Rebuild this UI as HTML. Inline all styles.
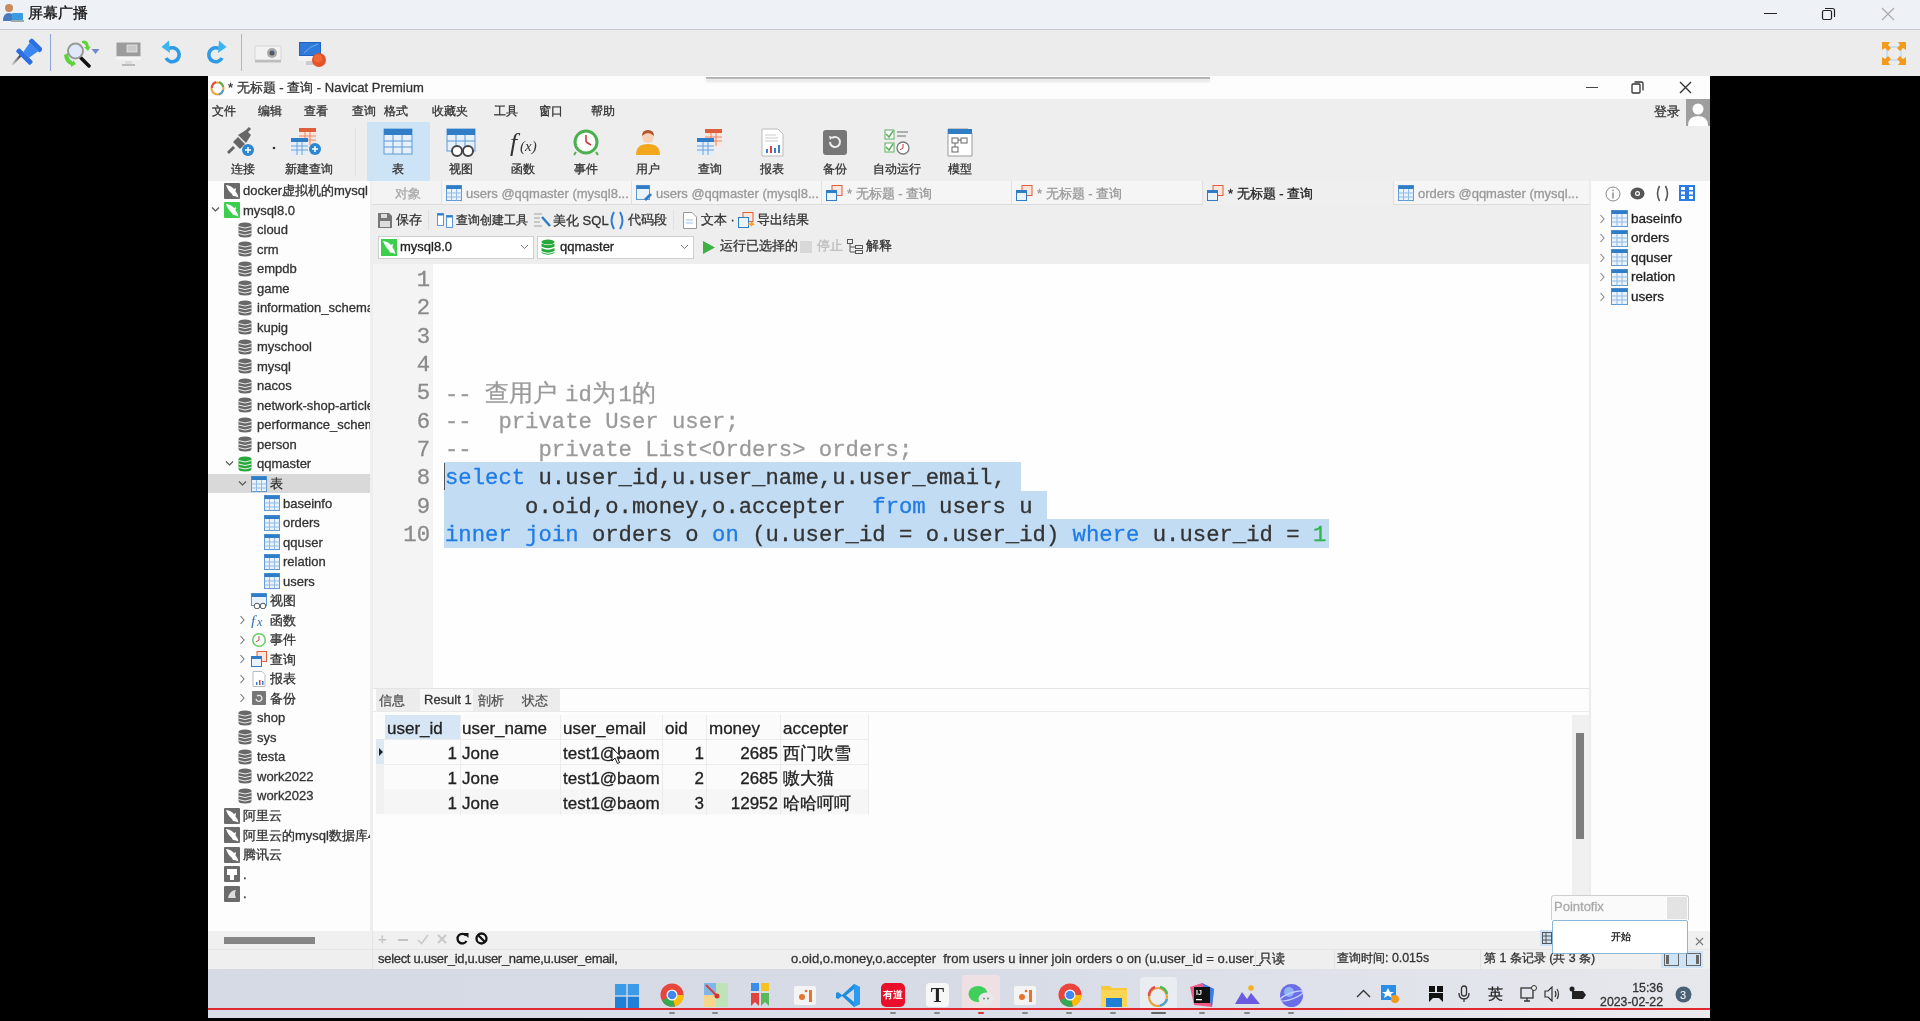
<!DOCTYPE html>
<html><head><meta charset="utf-8">
<style>
*{margin:0;padding:0;box-sizing:border-box}
html,body{width:1920px;height:1021px;overflow:hidden;background:#000;font-family:"Liberation Sans",sans-serif;color:#333;position:relative}
.a{position:absolute}
.t{position:absolute;white-space:nowrap;line-height:1;-webkit-text-stroke:0.3px currentColor}
</style></head><body>
<div style="position:absolute;left:0;top:0;width:1920px;height:1021px;filter:blur(0.45px)">
<!-- outer title bar -->
<div class="a" style="left:0;top:0;width:1920px;height:29px;background:#eef2f7"></div>
<div class="a" style="left:0;top:29px;width:1920px;height:1px;background:#c9c9cc"></div>
<div class="a" style="left:0;top:30px;width:1920px;height:46px;background:#ececec"></div>
<svg class="a" style="left:2px;top:3px" width="22" height="20" viewBox="0 0 22 20">
 <circle cx="7" cy="5" r="4" fill="#c98b5a"/><path d="M1 18 Q1 10 7 10 Q12 10 13 16 L13 18Z" fill="#4a7bbd"/>
 <rect x="10" y="10" width="11" height="7" rx="1" fill="#3a9be0"/><rect x="9" y="17" width="13" height="2" fill="#9aa"/>
</svg>
<div class="t" style="left:28px;top:5px;font-size:15px;color:#111">屏幕广播</div>
<div class="a" style="left:1764px;top:13px;width:13px;height:1px;background:#222"></div>
<svg class="a" style="left:1821px;top:7px" width="15" height="14" viewBox="0 0 15 14"><rect x="1.5" y="3.5" width="9" height="9" rx="1.5" fill="none" stroke="#222" stroke-width="1.2"/><path d="M4 1.5 H11.5 Q13.5 1.5 13.5 3.5 V10" fill="none" stroke="#222" stroke-width="1.2"/></svg>
<svg class="a" style="left:1881px;top:7px" width="14" height="14" viewBox="0 0 14 14"><path d="M1 1 L13 13 M13 1 L1 13" stroke="#aaa" stroke-width="1.2"/></svg>
<!-- outer toolbar icons -->
<svg class="a" style="left:10px;top:37px" width="32" height="30" viewBox="0 0 32 30">
 <defs><linearGradient id="ndl" x1="0" y1="1" x2="1" y2="0"><stop offset="0" stop-color="#ddd"/><stop offset="1" stop-color="#222"/></linearGradient></defs>
 <path d="M2 28 L12 17" stroke="url(#ndl)" stroke-width="2.2"/>
 <g transform="rotate(45 19 15)"><rect x="9" y="19" width="20" height="5" rx="1.5" fill="#2b6fe0"/><path d="M13 8 H25 L23 19 H15Z" fill="#3a86f2"/><rect x="11" y="3" width="16" height="5" rx="1.5" fill="#2b6fe0"/></g>
</svg>
<div class="a" style="left:50px;top:34px;width:1px;height:37px;background:#8fa3dd"></div>
<svg class="a" style="left:62px;top:38px" width="38" height="30" viewBox="0 0 38 30">
 <path d="M19 20 L27 28" stroke="#111" stroke-width="3.5" stroke-linecap="round"/>
 <circle cx="13.5" cy="13" r="7.5" fill="#dfe9fb" stroke="#9a9a9a" stroke-width="2"/>
 <path d="M20 3 Q26 1 27 9 L29 8 L26 13 L22 9 L24 9 Q23 5 20 5Z" fill="#5fd43a"/>
 <path d="M2 17 L6 15 Q6 21 11 24 L11 22 L14 26 L9 29 L9 27 Q3 25 2 17Z" fill="#5fd43a"/>
 <path d="M29.5 11 L37.5 11 L33.5 16Z" fill="#6e88d2"/>
</svg>
<svg class="a" style="left:116px;top:42px" width="26" height="26" viewBox="0 0 26 26">
 <rect x="0.5" y="0.5" width="24" height="14" fill="#9c9c9c"/><rect x="11" y="3" width="10" height="7" fill="#c9c9c9" stroke="#eee" stroke-width="0.7"/>
 <rect x="0" y="14.5" width="25" height="3.5" fill="#f4f4f4"/><rect x="9" y="19" width="7" height="3" fill="#ddd"/><rect x="6" y="22" width="13" height="2" fill="#bbb"/>
</svg>
<svg class="a" style="left:160px;top:39px" width="24" height="26" viewBox="0 0 24 26">
 <path d="M9 9.5 A7 7 0 1 1 6 19" fill="none" stroke="#2f9ae6" stroke-width="3.6"/>
 <path d="M1.5 8 L9 1.5 L10 14Z" fill="#3cb4f0"/>
</svg>
<svg class="a" style="left:204px;top:39px" width="24" height="26" viewBox="0 0 24 26">
 <path d="M15 9.5 A7 7 0 1 0 18 19" fill="none" stroke="#2f9ae6" stroke-width="3.6"/>
 <path d="M22.5 8 L15 1.5 L14 14Z" fill="#3cb4f0"/>
</svg>
<div class="a" style="left:241px;top:34px;width:1px;height:37px;background:#a8b4e6"></div>
<svg class="a" style="left:254px;top:43px" width="29" height="22" viewBox="0 0 29 22">
 <path d="M2 3 H26 Q27 3 27 5 V17 H1 V5 Q1 3 2 3Z" fill="#f2f2f2" stroke="#cfcfcf" stroke-width="0.8"/>
 <rect x="1" y="17" width="26" height="2.5" fill="#bdbdbd"/>
 <circle cx="18" cy="10" r="5" fill="#a9a9a9"/><circle cx="18" cy="10" r="2.5" fill="#555"/><circle cx="18" cy="9" r="1" fill="#36a"/>
</svg>
<svg class="a" style="left:298px;top:41px" width="30" height="27" viewBox="0 0 30 27">
 <rect x="1" y="1" width="22" height="14" fill="#1f62c2"/><rect x="2" y="2" width="20" height="12" fill="#2f7ad8"/><path d="M6 12 Q12 5 20 3" stroke="#6fb0f0" stroke-width="1" fill="none"/>
 <rect x="0" y="15" width="24" height="5" fill="#f3f3f3"/><rect x="8" y="20" width="8" height="4" fill="#ccc"/>
 <circle cx="21" cy="19" r="7" fill="#e4532a"/><circle cx="20" cy="17.5" r="4" fill="#ef6a3a"/>
</svg>
<svg class="a" style="left:1882px;top:42px" width="24" height="23" viewBox="0 0 24 23">
 <rect x="5" y="5" width="14" height="13" fill="none" stroke="#a8d0ea" stroke-width="1"/>
 <path d="M0 0 H8 L6 3 L9 6 L6 9 L3 6 L0 8Z" fill="#f39a1c"/>
 <path d="M24 0 H16 L18 3 L15 6 L18 9 L21 6 L24 8Z" fill="#f39a1c"/>
 <path d="M0 23 H8 L6 20 L9 17 L6 14 L3 17 L0 15Z" fill="#f39a1c"/>
 <path d="M24 23 H16 L18 20 L15 17 L18 14 L21 17 L24 15Z" fill="#f39a1c"/>
</svg>
<!-- navicat window base -->
<div class="a" style="left:208px;top:76px;width:1502px;height:942px;background:#eeeeee"></div>
<div class="a" style="left:208px;top:76px;width:1502px;height:23px;background:#fdfdfd"></div>
<div class="a" style="left:706px;top:77px;width:504px;height:2px;background:#a9a9a9;filter:blur(0.7px)"></div><div class="a" style="left:706px;top:79px;width:504px;height:3px;background:#e6e6e6;filter:blur(1px)"></div>
<svg class="a" style="left:209px;top:79px" width="17" height="17" viewBox="0 0 17 17">
 <circle cx="8.5" cy="9.5" r="6" fill="none" stroke="#e8a33a" stroke-width="2"/>
 <path d="M3 9 A6 6 0 0 1 7 3" fill="none" stroke="#e05050" stroke-width="2"/>
 <path d="M10 3 A6 6 0 0 1 14 8" fill="none" stroke="#55b555" stroke-width="2"/>
 <path d="M14 11 A6 6 0 0 1 10 15.5" fill="none" stroke="#4aa0e0" stroke-width="2"/>
</svg>
<div class="t" style="left:228px;top:81px;font-size:13px;color:#333">* 无标题 - 查询 - Navicat Premium</div>
<div class="a" style="left:1586px;top:87px;width:12px;height:1px;background:#444"></div>
<svg class="a" style="left:1631px;top:81px" width="13" height="13" viewBox="0 0 13 13"><rect x="1" y="3" width="8" height="9" rx="1" fill="none" stroke="#333" stroke-width="1.3"/><path d="M3.5 1 H10.5 Q12 1 12 2.5 V9.5" fill="none" stroke="#333" stroke-width="1.3"/></svg>
<svg class="a" style="left:1679px;top:81px" width="13" height="13" viewBox="0 0 13 13"><path d="M1 1 L12 12 M12 1 L1 12" stroke="#333" stroke-width="1.4"/></svg>
<!-- menu -->
<div class="t" style="left:212px;top:105px;font-size:12.3px;color:#333">文件</div>
<div class="t" style="left:258px;top:105px;font-size:12.3px;color:#333">编辑</div>
<div class="t" style="left:304px;top:105px;font-size:12.3px;color:#333">查看</div>
<div class="t" style="left:352px;top:105px;font-size:12.3px;color:#333">查询</div>
<div class="t" style="left:384px;top:105px;font-size:12.3px;color:#333">格式</div>
<div class="t" style="left:432px;top:105px;font-size:12.3px;color:#333">收藏夹</div>
<div class="t" style="left:494px;top:105px;font-size:12.3px;color:#333">工具</div>
<div class="t" style="left:539px;top:105px;font-size:12.3px;color:#333">窗口</div>
<div class="t" style="left:591px;top:105px;font-size:12.3px;color:#333">帮助</div>
<div class="t" style="left:1654px;top:105px;font-size:13px;color:#333">登录</div>
<svg class="a" style="left:1686px;top:99px" width="24" height="27" viewBox="0 0 24 27"><rect width="24" height="27" fill="#9e9e9e"/><circle cx="12" cy="10" r="5.5" fill="#fff"/><path d="M2 27 Q2 17 12 17 Q22 17 22 27Z" fill="#fff"/></svg>
<!-- main toolbar -->
<div class="a" style="left:367px;top:122px;width:63px;height:59px;background:#cde4f7"></div>
<div class="a" style="left:355px;top:128px;width:1px;height:48px;background:#e2e2e2"></div>
<svg class="a" style="left:225px;top:127px" width="56" height="32" viewBox="0 0 56 32">
 <path d="M3 26 L9 20" stroke="#666" stroke-width="3"/>
 <path d="M8 15 L15 22 L20 17 L13 10Z" fill="#666"/><path d="M13 8 L21 3 L26 8 L21 16Z" fill="#666"/><path d="M21 5 L25 1" stroke="#666" stroke-width="3"/>
 <circle cx="23" cy="23" r="6" fill="#2c86d0"/><path d="M23 20 V26 M20 23 H26" stroke="#fff" stroke-width="1.5"/>
 <circle cx="49" cy="21" r="1.3" fill="#333"/>
</svg>
<div class="t" style="left:231px;top:163px;font-size:12px;color:#333">连接</div>
<svg class="a" style="left:290px;top:127px" width="36" height="32" viewBox="0 0 36 32">
 <rect x="9" y="1" width="17" height="17" fill="#fbe5dc"/><rect x="9" y="1" width="17" height="4" fill="#e05f3b"/><path d="M9 9 H26 M9 13 H26 M15 5 V18 M20 5 V18" stroke="#e8876a" stroke-width="1"/>
 <rect x="1" y="11" width="17" height="17" fill="#e3eefa"/><rect x="1" y="11" width="17" height="4" fill="#2f7dc6"/><path d="M1 19 H18 M1 23 H18 M7 15 V28 M12 15 V28" stroke="#6aa2d8" stroke-width="1"/>
 <circle cx="25" cy="22" r="6" fill="#2c86d0"/><path d="M25 19 V25 M22 22 H28" stroke="#fff" stroke-width="1.5"/>
</svg>
<div class="t" style="left:285px;top:163px;font-size:12px;color:#333">新建查询</div>
<svg class="a" style="left:382px;top:127px" width="32" height="31" viewBox="0 0 32 31"><rect x="2" y="2" width="28" height="25" fill="#e6f0fa" stroke="#5d9ad6"/><rect x="2" y="2" width="28" height="6" fill="#2f7dc6"/><path d="M2 14 H30 M2 20 H30 M11 8 V27 M20 8 V27" stroke="#5d9ad6"/></svg>
<div class="t" style="left:392px;top:163px;font-size:12px;color:#333">表</div>
<svg class="a" style="left:445px;top:127px" width="32" height="31" viewBox="0 0 32 31"><rect x="2" y="2" width="28" height="22" fill="#e6f0fa" stroke="#5d9ad6"/><rect x="2" y="2" width="28" height="6" fill="#2f7dc6"/><path d="M2 14 H30 M11 8 V24 M20 8 V24" stroke="#5d9ad6"/><circle cx="12" cy="24" r="5" fill="#fff" stroke="#444" stroke-width="2"/><circle cx="23" cy="24" r="5" fill="#fff" stroke="#444" stroke-width="2"/></svg>
<div class="t" style="left:449px;top:163px;font-size:12px;color:#333">视图</div>
<svg class="a" style="left:507px;top:127px" width="32" height="31" viewBox="0 0 32 31"><text x="3" y="24" font-family="Liberation Serif" font-style="italic" font-size="26" fill="#333">f</text><text x="13" y="24" font-family="Liberation Serif" font-style="italic" font-size="15" fill="#333">(x)</text></svg>
<div class="t" style="left:511px;top:163px;font-size:12px;color:#333">函数</div>
<svg class="a" style="left:570px;top:127px" width="32" height="31" viewBox="0 0 32 31"><circle cx="16" cy="15" r="11" fill="#fff" stroke="#4caf50" stroke-width="3"/><path d="M16 15 V8 M16 15 L21 18" stroke="#c33" stroke-width="1.5"/><path d="M6 25 L4 28 M26 25 L28 28" stroke="#4caf50" stroke-width="2"/></svg>
<div class="t" style="left:574px;top:163px;font-size:12px;color:#333">事件</div>
<svg class="a" style="left:632px;top:127px" width="32" height="31" viewBox="0 0 32 31"><circle cx="16" cy="10" r="6" fill="#f6d2b8"/><path d="M10 9 Q10 3 16 3 Q22 3 22 9 Q19 6 16 6 Q13 6 10 9Z" fill="#b5532a"/><path d="M4 28 Q4 17 16 17 Q28 17 28 28Z" fill="#f2a71c"/></svg>
<div class="t" style="left:636px;top:163px;font-size:12px;color:#333">用户</div>
<svg class="a" style="left:694px;top:127px" width="32" height="31" viewBox="0 0 32 31"><rect x="11" y="2" width="17" height="17" fill="#fbe5dc"/><rect x="11" y="2" width="17" height="4" fill="#e05f3b"/><path d="M11 10 H28 M11 14 H28 M17 6 V19 M22 6 V19" stroke="#e8876a"/><rect x="3" y="11" width="17" height="17" fill="#e3eefa"/><rect x="3" y="11" width="17" height="4" fill="#2f7dc6"/><path d="M3 19 H20 M3 23 H20 M9 15 V28 M14 15 V28" stroke="#6aa2d8"/></svg>
<div class="t" style="left:698px;top:163px;font-size:12px;color:#333">查询</div>
<svg class="a" style="left:756px;top:127px" width="32" height="31" viewBox="0 0 32 31"><path d="M6 2 H22 L27 7 V29 H6Z" fill="#fff" stroke="#bbb"/><path d="M9 8 H20 M9 11 H22 M9 14 H22" stroke="#ccc"/><rect x="10" y="22" width="2" height="4" fill="#3a7fd0"/><rect x="14" y="19" width="2" height="7" fill="#e04040"/><rect x="18" y="21" width="2" height="5" fill="#3a7fd0"/><rect x="22" y="18" width="2" height="8" fill="#3a7fd0"/></svg>
<div class="t" style="left:760px;top:163px;font-size:12px;color:#333">报表</div>
<svg class="a" style="left:819px;top:127px" width="32" height="31" viewBox="0 0 32 31"><rect x="4" y="3" width="24" height="25" rx="3" fill="#777"/><path d="M11 15 A5 5 0 1 0 13 11" fill="none" stroke="#eee" stroke-width="2"/><path d="M10 9 L14 10 L11 13Z" fill="#eee"/></svg>
<div class="t" style="left:823px;top:163px;font-size:12px;color:#333">备份</div>
<svg class="a" style="left:881px;top:127px" width="32" height="31" viewBox="0 0 32 31"><rect x="4" y="3" width="9" height="9" fill="#fff" stroke="#5bb05b"/><path d="M5 7 L8 10 L12 4" stroke="#5bb05b" stroke-width="1.5" fill="none"/><rect x="4" y="16" width="9" height="9" fill="#fff" stroke="#5bb05b"/><path d="M5 20 L8 23 L12 17" stroke="#5bb05b" stroke-width="1.5" fill="none"/><path d="M16 5 H27 M16 9 H25" stroke="#999" stroke-width="1.5"/><circle cx="22" cy="21" r="6" fill="#fff" stroke="#777" stroke-width="1.3"/><path d="M22 21 V17 M22 21 L19 23" stroke="#c33"/></svg>
<div class="t" style="left:873px;top:163px;font-size:12px;color:#333">自动运行</div>
<svg class="a" style="left:944px;top:127px" width="32" height="31" viewBox="0 0 32 31"><path d="M4 2 H24 L28 6 V29 H4Z" fill="#fff" stroke="#999"/><rect x="4" y="2" width="24" height="5" fill="#2f7dc6"/><rect x="8" y="11" width="6" height="5" fill="none" stroke="#666"/><rect x="17" y="11" width="6" height="5" fill="none" stroke="#666"/><rect x="8" y="20" width="6" height="5" fill="none" stroke="#666"/><path d="M14 13 H17 M11 16 V20" stroke="#666"/></svg>
<div class="t" style="left:948px;top:163px;font-size:12px;color:#333">模型</div>
<div class="a" style="left:208px;top:181px;width:162px;height:750px;background:#fdfdfd;overflow:hidden" id="tree">
<div class="a" style="left:0;top:293.0px;width:164px;height:19px;background:#d9d9d9"></div>
<svg class="a" style="left:16px;top:1.5px" width="16" height="16" viewBox="0 0 16 16"><rect width="16" height="16" rx="1" fill="#6b6b6b"/><path d="M2 2 Q7 2.5 10 6 L12 5 L11.5 8.5 Q14 11 14.5 14.5 Q11 12.5 9 13 L8 11 Q4 8 2 2Z" fill="#fff"/></svg>
<div class="t" style="left:35px;top:3.0px;font-size:13px;color:#333">docker虚拟机的mysql</div>
<svg class="a" style="left:16px;top:21.0px" width="16" height="16" viewBox="0 0 16 16"><rect width="16" height="16" rx="1" fill="#3ccf4e"/><path d="M2 2 Q7 2.5 10 6 L12 5 L11.5 8.5 Q14 11 14.5 14.5 Q11 12.5 9 13 L8 11 Q4 8 2 2Z" fill="#fff"/></svg>
<div class="t" style="left:35px;top:22.5px;font-size:13px;color:#333">mysql8.0</div>
<svg class="a" style="left:3px;top:25.0px" width="9" height="7" viewBox="0 0 9 7"><path d="M1 1.5 L4.5 5 L8 1.5" fill="none" stroke="#555" stroke-width="1.2"/></svg>
<svg class="a" style="left:30px;top:40.6px" width="16" height="16" viewBox="0 0 16 16"><path d="M0.5 3 Q0.5 0.5 7 0.5 Q13.5 0.5 13.5 3 V13 Q13.5 15.5 7 15.5 Q0.5 15.5 0.5 13Z" fill="#686868"/><path d="M0.5 4.5 Q7 7.5 13.5 4.5 M0.5 8 Q7 11 13.5 8 M0.5 11.5 Q7 14.5 13.5 11.5" fill="none" stroke="#fdfdfd" stroke-width="0.9"/></svg>
<div class="t" style="left:49px;top:42.1px;font-size:13px;color:#333">cloud</div>
<svg class="a" style="left:30px;top:60.1px" width="16" height="16" viewBox="0 0 16 16"><path d="M0.5 3 Q0.5 0.5 7 0.5 Q13.5 0.5 13.5 3 V13 Q13.5 15.5 7 15.5 Q0.5 15.5 0.5 13Z" fill="#686868"/><path d="M0.5 4.5 Q7 7.5 13.5 4.5 M0.5 8 Q7 11 13.5 8 M0.5 11.5 Q7 14.5 13.5 11.5" fill="none" stroke="#fdfdfd" stroke-width="0.9"/></svg>
<div class="t" style="left:49px;top:61.6px;font-size:13px;color:#333">crm</div>
<svg class="a" style="left:30px;top:79.6px" width="16" height="16" viewBox="0 0 16 16"><path d="M0.5 3 Q0.5 0.5 7 0.5 Q13.5 0.5 13.5 3 V13 Q13.5 15.5 7 15.5 Q0.5 15.5 0.5 13Z" fill="#686868"/><path d="M0.5 4.5 Q7 7.5 13.5 4.5 M0.5 8 Q7 11 13.5 8 M0.5 11.5 Q7 14.5 13.5 11.5" fill="none" stroke="#fdfdfd" stroke-width="0.9"/></svg>
<div class="t" style="left:49px;top:81.1px;font-size:13px;color:#333">empdb</div>
<svg class="a" style="left:30px;top:99.1px" width="16" height="16" viewBox="0 0 16 16"><path d="M0.5 3 Q0.5 0.5 7 0.5 Q13.5 0.5 13.5 3 V13 Q13.5 15.5 7 15.5 Q0.5 15.5 0.5 13Z" fill="#686868"/><path d="M0.5 4.5 Q7 7.5 13.5 4.5 M0.5 8 Q7 11 13.5 8 M0.5 11.5 Q7 14.5 13.5 11.5" fill="none" stroke="#fdfdfd" stroke-width="0.9"/></svg>
<div class="t" style="left:49px;top:100.6px;font-size:13px;color:#333">game</div>
<svg class="a" style="left:30px;top:118.7px" width="16" height="16" viewBox="0 0 16 16"><path d="M0.5 3 Q0.5 0.5 7 0.5 Q13.5 0.5 13.5 3 V13 Q13.5 15.5 7 15.5 Q0.5 15.5 0.5 13Z" fill="#686868"/><path d="M0.5 4.5 Q7 7.5 13.5 4.5 M0.5 8 Q7 11 13.5 8 M0.5 11.5 Q7 14.5 13.5 11.5" fill="none" stroke="#fdfdfd" stroke-width="0.9"/></svg>
<div class="t" style="left:49px;top:120.2px;font-size:13px;color:#333">information_schema</div>
<svg class="a" style="left:30px;top:138.2px" width="16" height="16" viewBox="0 0 16 16"><path d="M0.5 3 Q0.5 0.5 7 0.5 Q13.5 0.5 13.5 3 V13 Q13.5 15.5 7 15.5 Q0.5 15.5 0.5 13Z" fill="#686868"/><path d="M0.5 4.5 Q7 7.5 13.5 4.5 M0.5 8 Q7 11 13.5 8 M0.5 11.5 Q7 14.5 13.5 11.5" fill="none" stroke="#fdfdfd" stroke-width="0.9"/></svg>
<div class="t" style="left:49px;top:139.7px;font-size:13px;color:#333">kupig</div>
<svg class="a" style="left:30px;top:157.7px" width="16" height="16" viewBox="0 0 16 16"><path d="M0.5 3 Q0.5 0.5 7 0.5 Q13.5 0.5 13.5 3 V13 Q13.5 15.5 7 15.5 Q0.5 15.5 0.5 13Z" fill="#686868"/><path d="M0.5 4.5 Q7 7.5 13.5 4.5 M0.5 8 Q7 11 13.5 8 M0.5 11.5 Q7 14.5 13.5 11.5" fill="none" stroke="#fdfdfd" stroke-width="0.9"/></svg>
<div class="t" style="left:49px;top:159.2px;font-size:13px;color:#333">myschool</div>
<svg class="a" style="left:30px;top:177.3px" width="16" height="16" viewBox="0 0 16 16"><path d="M0.5 3 Q0.5 0.5 7 0.5 Q13.5 0.5 13.5 3 V13 Q13.5 15.5 7 15.5 Q0.5 15.5 0.5 13Z" fill="#686868"/><path d="M0.5 4.5 Q7 7.5 13.5 4.5 M0.5 8 Q7 11 13.5 8 M0.5 11.5 Q7 14.5 13.5 11.5" fill="none" stroke="#fdfdfd" stroke-width="0.9"/></svg>
<div class="t" style="left:49px;top:178.8px;font-size:13px;color:#333">mysql</div>
<svg class="a" style="left:30px;top:196.8px" width="16" height="16" viewBox="0 0 16 16"><path d="M0.5 3 Q0.5 0.5 7 0.5 Q13.5 0.5 13.5 3 V13 Q13.5 15.5 7 15.5 Q0.5 15.5 0.5 13Z" fill="#686868"/><path d="M0.5 4.5 Q7 7.5 13.5 4.5 M0.5 8 Q7 11 13.5 8 M0.5 11.5 Q7 14.5 13.5 11.5" fill="none" stroke="#fdfdfd" stroke-width="0.9"/></svg>
<div class="t" style="left:49px;top:198.3px;font-size:13px;color:#333">nacos</div>
<svg class="a" style="left:30px;top:216.3px" width="16" height="16" viewBox="0 0 16 16"><path d="M0.5 3 Q0.5 0.5 7 0.5 Q13.5 0.5 13.5 3 V13 Q13.5 15.5 7 15.5 Q0.5 15.5 0.5 13Z" fill="#686868"/><path d="M0.5 4.5 Q7 7.5 13.5 4.5 M0.5 8 Q7 11 13.5 8 M0.5 11.5 Q7 14.5 13.5 11.5" fill="none" stroke="#fdfdfd" stroke-width="0.9"/></svg>
<div class="t" style="left:49px;top:217.8px;font-size:13px;color:#333">network-shop-article</div>
<svg class="a" style="left:30px;top:235.9px" width="16" height="16" viewBox="0 0 16 16"><path d="M0.5 3 Q0.5 0.5 7 0.5 Q13.5 0.5 13.5 3 V13 Q13.5 15.5 7 15.5 Q0.5 15.5 0.5 13Z" fill="#686868"/><path d="M0.5 4.5 Q7 7.5 13.5 4.5 M0.5 8 Q7 11 13.5 8 M0.5 11.5 Q7 14.5 13.5 11.5" fill="none" stroke="#fdfdfd" stroke-width="0.9"/></svg>
<div class="t" style="left:49px;top:237.4px;font-size:13px;color:#333">performance_schema</div>
<svg class="a" style="left:30px;top:255.4px" width="16" height="16" viewBox="0 0 16 16"><path d="M0.5 3 Q0.5 0.5 7 0.5 Q13.5 0.5 13.5 3 V13 Q13.5 15.5 7 15.5 Q0.5 15.5 0.5 13Z" fill="#686868"/><path d="M0.5 4.5 Q7 7.5 13.5 4.5 M0.5 8 Q7 11 13.5 8 M0.5 11.5 Q7 14.5 13.5 11.5" fill="none" stroke="#fdfdfd" stroke-width="0.9"/></svg>
<div class="t" style="left:49px;top:256.9px;font-size:13px;color:#333">person</div>
<svg class="a" style="left:30px;top:274.9px" width="16" height="16" viewBox="0 0 16 16"><path d="M0.5 3 Q0.5 0.5 7 0.5 Q13.5 0.5 13.5 3 V13 Q13.5 15.5 7 15.5 Q0.5 15.5 0.5 13Z" fill="#27a83a"/><path d="M0.5 4.5 Q7 7.5 13.5 4.5 M0.5 8 Q7 11 13.5 8 M0.5 11.5 Q7 14.5 13.5 11.5" fill="none" stroke="#fdfdfd" stroke-width="0.9"/></svg>
<div class="t" style="left:49px;top:276.4px;font-size:13px;color:#333">qqmaster</div>
<svg class="a" style="left:17px;top:278.9px" width="9" height="7" viewBox="0 0 9 7"><path d="M1 1.5 L4.5 5 L8 1.5" fill="none" stroke="#555" stroke-width="1.2"/></svg>
<svg class="a" style="left:43px;top:294.5px" width="16" height="16" viewBox="0 0 16 16"><rect x="0.5" y="0.5" width="15" height="15" fill="#eaf2fb" stroke="#5d9ad6"/><rect x="0.5" y="0.5" width="15" height="3.5" fill="#2f7dc6"/><path d="M0.5 8 H15.5 M0.5 12 H15.5 M5.5 4 V15.5 M10.5 4 V15.5" stroke="#8fbbe6" stroke-width="1"/></svg>
<div class="t" style="left:62px;top:296.0px;font-size:13px;color:#333">表</div>
<svg class="a" style="left:30px;top:298.5px" width="9" height="7" viewBox="0 0 9 7"><path d="M1 1.5 L4.5 5 L8 1.5" fill="none" stroke="#555" stroke-width="1.2"/></svg>
<svg class="a" style="left:56px;top:314.0px" width="16" height="16" viewBox="0 0 16 16"><rect x="0.5" y="0.5" width="15" height="15" fill="#eaf2fb" stroke="#5d9ad6"/><rect x="0.5" y="0.5" width="15" height="3.5" fill="#2f7dc6"/><path d="M0.5 8 H15.5 M0.5 12 H15.5 M5.5 4 V15.5 M10.5 4 V15.5" stroke="#8fbbe6" stroke-width="1"/></svg>
<div class="t" style="left:75px;top:315.5px;font-size:13px;color:#333">baseinfo</div>
<svg class="a" style="left:56px;top:333.5px" width="16" height="16" viewBox="0 0 16 16"><rect x="0.5" y="0.5" width="15" height="15" fill="#eaf2fb" stroke="#5d9ad6"/><rect x="0.5" y="0.5" width="15" height="3.5" fill="#2f7dc6"/><path d="M0.5 8 H15.5 M0.5 12 H15.5 M5.5 4 V15.5 M10.5 4 V15.5" stroke="#8fbbe6" stroke-width="1"/></svg>
<div class="t" style="left:75px;top:335.0px;font-size:13px;color:#333">orders</div>
<svg class="a" style="left:56px;top:353.0px" width="16" height="16" viewBox="0 0 16 16"><rect x="0.5" y="0.5" width="15" height="15" fill="#eaf2fb" stroke="#5d9ad6"/><rect x="0.5" y="0.5" width="15" height="3.5" fill="#2f7dc6"/><path d="M0.5 8 H15.5 M0.5 12 H15.5 M5.5 4 V15.5 M10.5 4 V15.5" stroke="#8fbbe6" stroke-width="1"/></svg>
<div class="t" style="left:75px;top:354.5px;font-size:13px;color:#333">qquser</div>
<svg class="a" style="left:56px;top:372.6px" width="16" height="16" viewBox="0 0 16 16"><rect x="0.5" y="0.5" width="15" height="15" fill="#eaf2fb" stroke="#5d9ad6"/><rect x="0.5" y="0.5" width="15" height="3.5" fill="#2f7dc6"/><path d="M0.5 8 H15.5 M0.5 12 H15.5 M5.5 4 V15.5 M10.5 4 V15.5" stroke="#8fbbe6" stroke-width="1"/></svg>
<div class="t" style="left:75px;top:374.1px;font-size:13px;color:#333">relation</div>
<svg class="a" style="left:56px;top:392.1px" width="16" height="16" viewBox="0 0 16 16"><rect x="0.5" y="0.5" width="15" height="15" fill="#eaf2fb" stroke="#5d9ad6"/><rect x="0.5" y="0.5" width="15" height="3.5" fill="#2f7dc6"/><path d="M0.5 8 H15.5 M0.5 12 H15.5 M5.5 4 V15.5 M10.5 4 V15.5" stroke="#8fbbe6" stroke-width="1"/></svg>
<div class="t" style="left:75px;top:393.6px;font-size:13px;color:#333">users</div>
<svg class="a" style="left:43px;top:411.6px" width="16" height="16" viewBox="0 0 16 16"><rect x="0.5" y="0.5" width="15" height="12" fill="#eaf2fb" stroke="#5d9ad6"/><rect x="0.5" y="0.5" width="15" height="3.5" fill="#2f7dc6"/><circle cx="6" cy="13" r="2.8" fill="#fff" stroke="#555"/><circle cx="12" cy="13" r="2.8" fill="#fff" stroke="#555"/></svg>
<div class="t" style="left:62px;top:413.1px;font-size:13px;color:#333">视图</div>
<svg class="a" style="left:43px;top:431.2px" width="16" height="16" viewBox="0 0 16 16"><text x="0" y="14" font-family="Liberation Serif" font-style="italic" font-size="15" fill="#2f6fb0">f</text><text x="6" y="14" font-family="Liberation Serif" font-style="italic" font-size="12" fill="#2f6fb0">x</text></svg>
<div class="t" style="left:62px;top:432.7px;font-size:13px;color:#333">函数</div>
<svg class="a" style="left:31px;top:434.2px" width="7" height="10" viewBox="0 0 7 10"><path d="M1.5 1 L5 5 L1.5 9" fill="none" stroke="#777" stroke-width="1.1"/></svg>
<svg class="a" style="left:43px;top:450.7px" width="16" height="16" viewBox="0 0 16 16"><circle cx="8" cy="8" r="6.3" fill="#fff" stroke="#6c6" stroke-width="1.5"/><path d="M8 8 V4 M8 8 L5 10" stroke="#c44"/></svg>
<div class="t" style="left:62px;top:452.2px;font-size:13px;color:#333">事件</div>
<svg class="a" style="left:31px;top:453.7px" width="7" height="10" viewBox="0 0 7 10"><path d="M1.5 1 L5 5 L1.5 9" fill="none" stroke="#777" stroke-width="1.1"/></svg>
<svg class="a" style="left:43px;top:470.2px" width="16" height="16" viewBox="0 0 16 16"><rect x="6" y="0.5" width="9.5" height="10" fill="#fbe5dc" stroke="#e05f3b"/><rect x="0.5" y="5.5" width="10" height="10" fill="#eaf2fb" stroke="#2f7dc6"/><rect x="0.5" y="5.5" width="10" height="2.5" fill="#2f7dc6"/></svg>
<div class="t" style="left:62px;top:471.7px;font-size:13px;color:#333">查询</div>
<svg class="a" style="left:31px;top:473.2px" width="7" height="10" viewBox="0 0 7 10"><path d="M1.5 1 L5 5 L1.5 9" fill="none" stroke="#777" stroke-width="1.1"/></svg>
<svg class="a" style="left:43px;top:489.8px" width="16" height="16" viewBox="0 0 16 16"><path d="M2 0.5 H11 L14 3.5 V15.5 H2Z" fill="#fff" stroke="#bbb"/><rect x="5" y="11" width="1.5" height="3" fill="#3a7fd0"/><rect x="8" y="9" width="1.5" height="5" fill="#e04040"/><rect x="11" y="10" width="1.5" height="4" fill="#3a7fd0"/></svg>
<div class="t" style="left:62px;top:491.3px;font-size:13px;color:#333">报表</div>
<svg class="a" style="left:31px;top:492.8px" width="7" height="10" viewBox="0 0 7 10"><path d="M1.5 1 L5 5 L1.5 9" fill="none" stroke="#777" stroke-width="1.1"/></svg>
<svg class="a" style="left:43px;top:509.3px" width="16" height="16" viewBox="0 0 16 16"><rect x="1" y="1" width="14" height="14" rx="1" fill="#777"/><path d="M5 9 A3 3 0 1 0 6 6" fill="none" stroke="#eee" stroke-width="1.3"/></svg>
<div class="t" style="left:62px;top:510.8px;font-size:13px;color:#333">备份</div>
<svg class="a" style="left:31px;top:512.3px" width="7" height="10" viewBox="0 0 7 10"><path d="M1.5 1 L5 5 L1.5 9" fill="none" stroke="#777" stroke-width="1.1"/></svg>
<svg class="a" style="left:30px;top:528.8px" width="16" height="16" viewBox="0 0 16 16"><path d="M0.5 3 Q0.5 0.5 7 0.5 Q13.5 0.5 13.5 3 V13 Q13.5 15.5 7 15.5 Q0.5 15.5 0.5 13Z" fill="#686868"/><path d="M0.5 4.5 Q7 7.5 13.5 4.5 M0.5 8 Q7 11 13.5 8 M0.5 11.5 Q7 14.5 13.5 11.5" fill="none" stroke="#fdfdfd" stroke-width="0.9"/></svg>
<div class="t" style="left:49px;top:530.3px;font-size:13px;color:#333">shop</div>
<svg class="a" style="left:30px;top:548.3px" width="16" height="16" viewBox="0 0 16 16"><path d="M0.5 3 Q0.5 0.5 7 0.5 Q13.5 0.5 13.5 3 V13 Q13.5 15.5 7 15.5 Q0.5 15.5 0.5 13Z" fill="#686868"/><path d="M0.5 4.5 Q7 7.5 13.5 4.5 M0.5 8 Q7 11 13.5 8 M0.5 11.5 Q7 14.5 13.5 11.5" fill="none" stroke="#fdfdfd" stroke-width="0.9"/></svg>
<div class="t" style="left:49px;top:549.8px;font-size:13px;color:#333">sys</div>
<svg class="a" style="left:30px;top:567.9px" width="16" height="16" viewBox="0 0 16 16"><path d="M0.5 3 Q0.5 0.5 7 0.5 Q13.5 0.5 13.5 3 V13 Q13.5 15.5 7 15.5 Q0.5 15.5 0.5 13Z" fill="#686868"/><path d="M0.5 4.5 Q7 7.5 13.5 4.5 M0.5 8 Q7 11 13.5 8 M0.5 11.5 Q7 14.5 13.5 11.5" fill="none" stroke="#fdfdfd" stroke-width="0.9"/></svg>
<div class="t" style="left:49px;top:569.4px;font-size:13px;color:#333">testa</div>
<svg class="a" style="left:30px;top:587.4px" width="16" height="16" viewBox="0 0 16 16"><path d="M0.5 3 Q0.5 0.5 7 0.5 Q13.5 0.5 13.5 3 V13 Q13.5 15.5 7 15.5 Q0.5 15.5 0.5 13Z" fill="#686868"/><path d="M0.5 4.5 Q7 7.5 13.5 4.5 M0.5 8 Q7 11 13.5 8 M0.5 11.5 Q7 14.5 13.5 11.5" fill="none" stroke="#fdfdfd" stroke-width="0.9"/></svg>
<div class="t" style="left:49px;top:588.9px;font-size:13px;color:#333">work2022</div>
<svg class="a" style="left:30px;top:606.9px" width="16" height="16" viewBox="0 0 16 16"><path d="M0.5 3 Q0.5 0.5 7 0.5 Q13.5 0.5 13.5 3 V13 Q13.5 15.5 7 15.5 Q0.5 15.5 0.5 13Z" fill="#686868"/><path d="M0.5 4.5 Q7 7.5 13.5 4.5 M0.5 8 Q7 11 13.5 8 M0.5 11.5 Q7 14.5 13.5 11.5" fill="none" stroke="#fdfdfd" stroke-width="0.9"/></svg>
<div class="t" style="left:49px;top:608.4px;font-size:13px;color:#333">work2023</div>
<svg class="a" style="left:16px;top:626.5px" width="16" height="16" viewBox="0 0 16 16"><rect width="16" height="16" rx="1" fill="#6b6b6b"/><path d="M2 2 Q7 2.5 10 6 L12 5 L11.5 8.5 Q14 11 14.5 14.5 Q11 12.5 9 13 L8 11 Q4 8 2 2Z" fill="#fff"/></svg>
<div class="t" style="left:35px;top:628.0px;font-size:13px;color:#333">阿里云</div>
<svg class="a" style="left:16px;top:646.0px" width="16" height="16" viewBox="0 0 16 16"><rect width="16" height="16" rx="1" fill="#6b6b6b"/><path d="M2 2 Q7 2.5 10 6 L12 5 L11.5 8.5 Q14 11 14.5 14.5 Q11 12.5 9 13 L8 11 Q4 8 2 2Z" fill="#fff"/></svg>
<div class="t" style="left:35px;top:647.5px;font-size:13px;color:#333">阿里云的mysql数据库4</div>
<svg class="a" style="left:16px;top:665.5px" width="16" height="16" viewBox="0 0 16 16"><rect width="16" height="16" rx="1" fill="#6b6b6b"/><path d="M2 2 Q7 2.5 10 6 L12 5 L11.5 8.5 Q14 11 14.5 14.5 Q11 12.5 9 13 L8 11 Q4 8 2 2Z" fill="#fff"/></svg>
<div class="t" style="left:35px;top:667.0px;font-size:13px;color:#333">腾讯云</div>
<svg class="a" style="left:16px;top:685.1px" width="16" height="16" viewBox="0 0 16 16"><rect width="16" height="16" rx="1" fill="#6b6b6b"/><rect x="3" y="3" width="10" height="6" fill="#fff"/><rect x="6" y="9" width="4" height="5" fill="#fff"/></svg>
<div class="t" style="left:35px;top:686.6px;font-size:13px;color:#333">.</div>
<svg class="a" style="left:16px;top:704.6px" width="16" height="16" viewBox="0 0 16 16"><rect width="16" height="16" rx="1" fill="#6b6b6b"/><path d="M4 12 Q6 4 12 4 Q10 8 12 12Z" fill="#ddd"/></svg>
<div class="t" style="left:35px;top:706.1px;font-size:13px;color:#333">.</div>
</div>
<!-- tab bar -->
<div class="a" style="left:372px;top:181px;width:1217px;height:24px;background:#efefef"></div>
<div class="a" style="left:372px;top:181px;width:70px;height:24px;background:#f3f3f3;border-right:1px solid #e2e2e2;border-bottom:1px solid #dcdcdc"></div>
<div class="t" style="left:395px;top:187px;font-size:13px;color:#aaa">对象</div>
<div class="a" style="left:442px;top:181px;width:190px;height:24px;background:#f5f5f5;border-right:1px solid #e0e0e0;border-bottom:1px solid #dcdcdc"></div>
<div class="a" style="left:632px;top:181px;width:190px;height:24px;background:#f5f5f5;border-right:1px solid #e0e0e0;border-bottom:1px solid #dcdcdc"></div>
<div class="a" style="left:822px;top:181px;width:190px;height:24px;background:#f5f5f5;border-right:1px solid #e0e0e0;border-bottom:1px solid #dcdcdc"></div>
<div class="a" style="left:1012px;top:181px;width:191px;height:24px;background:#f5f5f5;border-right:1px solid #e0e0e0;border-bottom:1px solid #dcdcdc"></div>
<div class="a" style="left:1393px;top:181px;width:196px;height:24px;background:#f5f5f5;border-left:1px solid #e0e0e0;border-bottom:1px solid #dcdcdc"></div>
<svg class="a" style="left:446px;top:185px" width="16" height="16" viewBox="0 0 16 16"><rect x="0.5" y="0.5" width="15" height="15" fill="#eaf2fb" stroke="#5d9ad6"/><rect x="0.5" y="0.5" width="15" height="3.5" fill="#2f7dc6"/><path d="M0.5 8 H15.5 M0.5 12 H15.5 M5.5 4 V15.5 M10.5 4 V15.5" stroke="#8fbbe6"/></svg>
<div class="t" style="left:466px;top:187px;font-size:13px;color:#999">users @qqmaster (mysql8...</div>
<svg class="a" style="left:636px;top:185px" width="16" height="16" viewBox="0 0 16 16"><rect x="0.5" y="0.5" width="13" height="14" fill="#eaf2fb" stroke="#5d9ad6"/><rect x="0.5" y="0.5" width="13" height="3.5" fill="#2f7dc6"/><path d="M8 14 L14 8 L16 10 L10 16Z" fill="#2f7dc6"/></svg>
<div class="t" style="left:656px;top:187px;font-size:13px;color:#999">users @qqmaster (mysql8...</div>
<svg class="a" style="left:826px;top:185px" width="17" height="16" viewBox="0 0 17 16"><rect x="6" y="0.5" width="10" height="10" fill="#fbe5dc" stroke="#e05f3b"/><rect x="0.5" y="5.5" width="10" height="10" fill="#eaf2fb" stroke="#2f7dc6"/><rect x="0.5" y="5.5" width="10" height="2.5" fill="#2f7dc6"/></svg>
<div class="t" style="left:847px;top:187px;font-size:13px;color:#999">* 无标题 - 查询</div>
<svg class="a" style="left:1016px;top:185px" width="17" height="16" viewBox="0 0 17 16"><rect x="6" y="0.5" width="10" height="10" fill="#fbe5dc" stroke="#e05f3b"/><rect x="0.5" y="5.5" width="10" height="10" fill="#eaf2fb" stroke="#2f7dc6"/><rect x="0.5" y="5.5" width="10" height="2.5" fill="#2f7dc6"/></svg>
<div class="t" style="left:1037px;top:187px;font-size:13px;color:#999">* 无标题 - 查询</div>
<svg class="a" style="left:1207px;top:185px" width="17" height="16" viewBox="0 0 17 16"><rect x="6" y="0.5" width="10" height="10" fill="#fbe5dc" stroke="#e05f3b"/><rect x="0.5" y="5.5" width="10" height="10" fill="#eaf2fb" stroke="#2f7dc6"/><rect x="0.5" y="5.5" width="10" height="2.5" fill="#2f7dc6"/></svg>
<div class="t" style="left:1228px;top:187px;font-size:13px;color:#222">* 无标题 - 查询</div>
<svg class="a" style="left:1398px;top:185px" width="16" height="16" viewBox="0 0 16 16"><rect x="0.5" y="0.5" width="15" height="15" fill="#eaf2fb" stroke="#5d9ad6"/><rect x="0.5" y="0.5" width="15" height="3.5" fill="#2f7dc6"/><path d="M0.5 8 H15.5 M0.5 12 H15.5 M5.5 4 V15.5 M10.5 4 V15.5" stroke="#8fbbe6"/></svg>
<div class="t" style="left:1418px;top:187px;font-size:13px;color:#999">orders @qqmaster (mysql...</div>

<!-- query toolbar -->
<svg class="a" style="left:378px;top:213px" width="14" height="15" viewBox="0 0 14 15"><path d="M0 0 H11 L14 3 V15 H0Z" fill="#777"/><rect x="3" y="1" width="6" height="4" fill="#ddd"/><rect x="2" y="8" width="10" height="6" fill="#ddd"/></svg>
<div class="t" style="left:396px;top:214px;font-size:12.5px;color:#333">保存</div>
<div class="a" style="left:428px;top:210px;width:1px;height:20px;background:#e0e0e0"></div>
<svg class="a" style="left:437px;top:212px" width="17" height="17" viewBox="0 0 17 17"><rect x="0.5" y="1.5" width="6" height="12" fill="#fff" stroke="#5d9ad6"/><rect x="9.5" y="3.5" width="6" height="12" fill="#fff" stroke="#5d9ad6"/><rect x="0.5" y="1.5" width="6" height="2" fill="#2f7dc6"/><rect x="9.5" y="3.5" width="6" height="2" fill="#2f7dc6"/></svg>
<div class="t" style="left:456px;top:214px;font-size:12px;color:#333">查询创建工具</div>
<svg class="a" style="left:534px;top:212px" width="18" height="17" viewBox="0 0 18 17"><path d="M0 2 H8 M0 6 H6 M0 10 H6 M0 14 H8" stroke="#bbb" stroke-width="1.3"/><path d="M8 5 L16 14" stroke="#2f7dc6" stroke-width="2.5"/></svg>
<div class="t" style="left:553px;top:214px;font-size:13px;color:#333">美化 SQL</div>
<svg class="a" style="left:609px;top:211px" width="16" height="19" viewBox="0 0 16 19"><path d="M5 1 Q0 9.5 5 18" fill="none" stroke="#2f7dd6" stroke-width="2"/><path d="M11 1 Q16 9.5 11 18" fill="none" stroke="#2f7dd6" stroke-width="2"/></svg>
<div class="t" style="left:628px;top:214px;font-size:12.5px;color:#333">代码段</div>
<div class="a" style="left:673px;top:210px;width:1px;height:20px;background:#e0e0e0"></div>
<svg class="a" style="left:683px;top:212px" width="14" height="17" viewBox="0 0 14 17"><path d="M0.5 0.5 H9 L13.5 5 V16.5 H0.5Z" fill="#fff" stroke="#999"/><path d="M3 8 H10 M3 11 H10" stroke="#9cc3e8"/></svg>
<div class="t" style="left:701px;top:214px;font-size:12.5px;color:#333">文本 ·</div>
<svg class="a" style="left:738px;top:212px" width="17" height="17" viewBox="0 0 17 17"><rect x="5" y="0.5" width="10" height="9" fill="#fbe5dc" stroke="#e05f3b"/><rect x="0.5" y="5.5" width="10" height="10" fill="#eaf2fb" stroke="#2f7dc6"/><path d="M10 12 H15 L13 10 M15 12 L13 14" stroke="#f39a1c" stroke-width="1.5" fill="none"/></svg>
<div class="t" style="left:757px;top:214px;font-size:12.5px;color:#333">导出结果</div>

<!-- selectors -->
<div class="a" style="left:378px;top:236px;width:156px;height:23px;background:#fff;border:1px solid #cfcfcf"></div>
<svg class="a" style="left:381px;top:239px" width="16" height="17" viewBox="0 0 16 17"><rect width="16" height="17" fill="#3ccf4e"/><path d="M2 2 Q7 2.5 10 6 L12 5 L11.5 8.5 Q14 11 14.5 15 Q11 13 9 13.5 L8 11.5 Q4 8 2 2Z" fill="#fff"/></svg>
<div class="t" style="left:400px;top:240px;font-size:13px;color:#222">mysql8.0</div>
<svg class="a" style="left:520px;top:244px" width="9" height="6" viewBox="0 0 9 6"><path d="M1 1 L4.5 4.5 L8 1" fill="none" stroke="#777"/></svg>
<div class="a" style="left:537px;top:236px;width:157px;height:23px;background:#fff;border:1px solid #cfcfcf"></div>
<svg class="a" style="left:541px;top:239px" width="14" height="17" viewBox="0 0 14 17"><ellipse cx="7" cy="3" rx="6.5" ry="2.5" fill="#27a83a"/><path d="M0.5 4.5 Q7 8 13.5 4.5 V7.5 Q7 11 0.5 7.5Z" fill="#27a83a"/><path d="M0.5 9 Q7 12.5 13.5 9 V12 Q7 15.5 0.5 12Z" fill="#27a83a"/><path d="M0.5 13 Q7 16.5 13.5 13 V14 Q7 17.5 0.5 14Z" fill="#27a83a"/></svg>
<div class="t" style="left:560px;top:240px;font-size:13px;color:#222">qqmaster</div>
<svg class="a" style="left:680px;top:244px" width="9" height="6" viewBox="0 0 9 6"><path d="M1 1 L4.5 4.5 L8 1" fill="none" stroke="#777"/></svg>
<svg class="a" style="left:703px;top:241px" width="12" height="13" viewBox="0 0 12 13"><path d="M0 0 L12 6.5 L0 13Z" fill="#3cb043"/></svg>
<div class="t" style="left:720px;top:240px;font-size:12.5px;color:#333">运行已选择的</div>
<div class="a" style="left:800px;top:241px;width:12px;height:12px;background:#d8d8d8"></div>
<div class="t" style="left:817px;top:240px;font-size:12.5px;color:#bbb">停止</div>
<svg class="a" style="left:847px;top:239px" width="17" height="16" viewBox="0 0 17 16"><rect x="0.5" y="0.5" width="5" height="4" fill="none" stroke="#555"/><rect x="8.5" y="6.5" width="7" height="3" fill="none" stroke="#555"/><rect x="8.5" y="11.5" width="7" height="3" fill="none" stroke="#555"/><path d="M3 4.5 V13 H8.5 M3 8 H8.5" fill="none" stroke="#555"/></svg>
<div class="t" style="left:866px;top:240px;font-size:12.5px;color:#333">解释</div>
<div class="a" style="left:373px;top:264px;width:60px;height:424px;background:#f4f4f4"></div>
<div class="a" style="left:433px;top:264px;width:1156px;height:424px;background:#fefefe"></div>
<div class="a" style="left:444px;top:462.31px;width:577.0px;height:28.83px;background:#c2dcf3"></div>
<div class="a" style="left:444px;top:490.64px;width:602.8px;height:28.83px;background:#c2dcf3"></div>
<div class="a" style="left:444px;top:518.97px;width:885.1px;height:28.83px;background:#c2dcf3"></div>
<div class="a" style="left:444px;top:463.3px;width:1px;height:27px;background:#555"></div>
<div class="t" style="left:373px;top:266.00px;width:57px;text-align:right;font-family:'Liberation Mono',monospace;font-size:22.25px;line-height:28.33px;color:#8a8a8a">1</div>
<div class="t" style="left:373px;top:294.33px;width:57px;text-align:right;font-family:'Liberation Mono',monospace;font-size:22.25px;line-height:28.33px;color:#8a8a8a">2</div>
<div class="t" style="left:373px;top:322.66px;width:57px;text-align:right;font-family:'Liberation Mono',monospace;font-size:22.25px;line-height:28.33px;color:#8a8a8a">3</div>
<div class="t" style="left:373px;top:350.99px;width:57px;text-align:right;font-family:'Liberation Mono',monospace;font-size:22.25px;line-height:28.33px;color:#8a8a8a">4</div>
<div class="t" style="left:373px;top:379.32px;width:57px;text-align:right;font-family:'Liberation Mono',monospace;font-size:22.25px;line-height:28.33px;color:#8a8a8a">5</div>
<div class="t" style="left:445px;top:379.32px;font-family:'Liberation Mono',monospace;font-size:22.25px;line-height:28.33px;color:#333;white-space:pre"><span style="color:#9a9a9a">-- <span style="display:inline-block;width:80px;font-family:'Liberation Serif',serif;font-size:24px">查用户</span>id<span style="display:inline-block;width:26.7px;font-family:'Liberation Serif',serif;font-size:24px">为</span>1<span style="display:inline-block;width:26.7px;font-family:'Liberation Serif',serif;font-size:24px">的</span></span></div>
<div class="t" style="left:373px;top:407.65px;width:57px;text-align:right;font-family:'Liberation Mono',monospace;font-size:22.25px;line-height:28.33px;color:#8a8a8a">6</div>
<div class="t" style="left:445px;top:407.65px;font-family:'Liberation Mono',monospace;font-size:22.25px;line-height:28.33px;color:#333;white-space:pre"><span style="color:#9a9a9a">--  private User user;</span></div>
<div class="t" style="left:373px;top:435.98px;width:57px;text-align:right;font-family:'Liberation Mono',monospace;font-size:22.25px;line-height:28.33px;color:#8a8a8a">7</div>
<div class="t" style="left:445px;top:435.98px;font-family:'Liberation Mono',monospace;font-size:22.25px;line-height:28.33px;color:#333;white-space:pre"><span style="color:#9a9a9a">--     private List&lt;Orders&gt; orders;</span></div>
<div class="t" style="left:373px;top:464.31px;width:57px;text-align:right;font-family:'Liberation Mono',monospace;font-size:22.25px;line-height:28.33px;color:#8a8a8a">8</div>
<div class="t" style="left:445px;top:464.31px;font-family:'Liberation Mono',monospace;font-size:22.25px;line-height:28.33px;color:#333;white-space:pre"><span style="color:#1f7be6">select</span> u.user_id,u.user_name,u.user_email,</div>
<div class="t" style="left:373px;top:492.64px;width:57px;text-align:right;font-family:'Liberation Mono',monospace;font-size:22.25px;line-height:28.33px;color:#8a8a8a">9</div>
<div class="t" style="left:445px;top:492.64px;font-family:'Liberation Mono',monospace;font-size:22.25px;line-height:28.33px;color:#333;white-space:pre">      o.oid,o.money,o.accepter  <span style="color:#1f7be6">from</span> users u</div>
<div class="t" style="left:373px;top:520.97px;width:57px;text-align:right;font-family:'Liberation Mono',monospace;font-size:22.25px;line-height:28.33px;color:#8a8a8a">10</div>
<div class="t" style="left:445px;top:520.97px;font-family:'Liberation Mono',monospace;font-size:22.25px;line-height:28.33px;color:#333;white-space:pre"><span style="color:#1f7be6">inner</span> <span style="color:#1f7be6">join</span> orders o <span style="color:#1f7be6">on</span> (u.user_id = o.user_id) <span style="color:#1f7be6">where</span> u.user_id = <span style="color:#2db54a">1</span></div>
<!-- results -->
<div class="a" style="left:373px;top:688px;width:1216px;height:243px;background:#fdfdfd"></div>
<div class="a" style="left:373px;top:688px;width:1216px;height:1px;background:#e4e4e4"></div><div class="a" style="left:373px;top:711px;width:1216px;height:1px;background:#eaeaea"></div>
<div class="a" style="left:376px;top:689px;width:184px;height:22px;background:#ececec"></div>
<div class="a" style="left:420px;top:689px;width:53px;height:22px;background:#f6f6f6"></div>
<div class="t" style="left:379px;top:694px;font-size:13px;color:#555">信息</div>
<div class="t" style="left:424px;top:693px;font-size:13px;color:#333">Result 1</div>
<div class="t" style="left:478px;top:694px;font-size:13px;color:#555">剖析</div>
<div class="t" style="left:522px;top:694px;font-size:13px;color:#555">状态</div>
<!-- grid -->
<div class="a" style="left:376px;top:715px;width:492px;height:100px;background:#fbfbfb"></div>
<div class="a" style="left:376px;top:739px;width:8px;height:75px;background:#f1f1f1"></div>
<div class="a" style="left:376px;top:739px;width:8px;height:25px;background:#dde8f2"></div>
<svg class="a" style="left:379px;top:748px" width="5" height="8" viewBox="0 0 5 8"><path d="M0 0 L4 4 L0 8Z" fill="#222"/></svg>
<div class="a" style="left:385px;top:715px;width:75px;height:24px;background:#d6e6f4"></div>
<div class="a" style="left:384px;top:789px;width:484px;height:25px;background:#f6f6f6"></div>
<div class="a" style="left:384px;top:739px;width:484px;height:1px;background:#ececec"></div>
<div class="a" style="left:384px;top:764px;width:484px;height:1px;background:#ececec"></div>
<div class="a" style="left:460px;top:715px;width:1px;height:100px;background:#ececec"></div>
<div class="a" style="left:560px;top:715px;width:1px;height:100px;background:#ececec"></div>
<div class="a" style="left:662px;top:715px;width:1px;height:100px;background:#ececec"></div>
<div class="a" style="left:706px;top:715px;width:1px;height:100px;background:#ececec"></div>
<div class="a" style="left:780px;top:715px;width:1px;height:100px;background:#ececec"></div>
<div class="a" style="left:868px;top:715px;width:1px;height:100px;background:#ececec"></div>
<div class="t" style="left:387px;top:720px;font-size:17px;color:#222">user_id</div>
<div class="t" style="left:462px;top:720px;font-size:17px;color:#222">user_name</div>
<div class="t" style="left:563px;top:720px;font-size:17px;color:#222">user_email</div>
<div class="t" style="left:665px;top:720px;font-size:17px;color:#222">oid</div>
<div class="t" style="left:709px;top:720px;font-size:17px;color:#222">money</div>
<div class="t" style="left:783px;top:720px;font-size:17px;color:#222">accepter</div>
<div class="t" style="left:385px;top:744.5px;width:72px;text-align:right;font-size:17px;color:#222">1</div>
<div class="t" style="left:462px;top:744.5px;font-size:17px;color:#222">Jone</div>
<div class="t" style="left:563px;top:744.5px;font-size:17px;color:#222">test1@baom</div>
<div class="t" style="left:662px;top:744.5px;width:42px;text-align:right;font-size:17px;color:#222">1</div>
<div class="t" style="left:706px;top:744.5px;width:72px;text-align:right;font-size:17px;color:#222">2685</div>
<div class="t" style="left:783px;top:744.5px;font-size:17px;color:#222">西门吹雪</div>
<div class="t" style="left:385px;top:769.5px;width:72px;text-align:right;font-size:17px;color:#222">1</div>
<div class="t" style="left:462px;top:769.5px;font-size:17px;color:#222">Jone</div>
<div class="t" style="left:563px;top:769.5px;font-size:17px;color:#222">test1@baom</div>
<div class="t" style="left:662px;top:769.5px;width:42px;text-align:right;font-size:17px;color:#222">2</div>
<div class="t" style="left:706px;top:769.5px;width:72px;text-align:right;font-size:17px;color:#222">2685</div>
<div class="t" style="left:783px;top:769.5px;font-size:17px;color:#222">嗷大猫</div>
<div class="t" style="left:385px;top:794.5px;width:72px;text-align:right;font-size:17px;color:#222">1</div>
<div class="t" style="left:462px;top:794.5px;font-size:17px;color:#222">Jone</div>
<div class="t" style="left:563px;top:794.5px;font-size:17px;color:#222">test1@baom</div>
<div class="t" style="left:662px;top:794.5px;width:42px;text-align:right;font-size:17px;color:#222">3</div>
<div class="t" style="left:706px;top:794.5px;width:72px;text-align:right;font-size:17px;color:#222">12952</div>
<div class="t" style="left:783px;top:794.5px;font-size:17px;color:#222">哈哈呵呵</div>
<svg class="a" style="left:611px;top:747px" width="12" height="18" viewBox="0 0 12 18"><path d="M1 1 L1 14 L4 11 L6.5 16.5 L8.5 15.5 L6 10 L10.5 10Z" fill="#fff" stroke="#111" stroke-width="1"/></svg>
<!-- results scrollbar -->
<div class="a" style="left:1572px;top:715px;width:17px;height:216px;background:#f0f0f0"></div>
<div class="a" style="left:1576px;top:733px;width:8px;height:106px;background:#7d7d7d"></div>
<!-- right panel -->
<div class="a" style="left:1589px;top:181px;width:2px;height:750px;background:#ececec"></div>
<div class="a" style="left:1591px;top:181px;width:119px;height:750px;background:#fdfdfd"></div>
<svg class="a" style="left:1605px;top:186px" width="16" height="16" viewBox="0 0 16 16"><circle cx="8" cy="8" r="7" fill="none" stroke="#888" stroke-width="1"/><rect x="7.3" y="6.5" width="1.4" height="6" fill="#888"/><circle cx="8" cy="4.3" r="0.9" fill="#888"/></svg>
<svg class="a" style="left:1630px;top:187px" width="15" height="13" viewBox="0 0 15 13"><ellipse cx="7.5" cy="6.5" rx="7" ry="6" fill="#555"/><circle cx="7.5" cy="6.5" r="2.5" fill="#fff"/><circle cx="7.5" cy="6.5" r="1.3" fill="#555"/></svg>
<svg class="a" style="left:1655px;top:185px" width="15" height="17" viewBox="0 0 15 17"><path d="M4.5 1 Q0.5 8.5 4.5 16" fill="none" stroke="#555" stroke-width="1.6"/><path d="M10.5 1 Q14.5 8.5 10.5 16" fill="none" stroke="#555" stroke-width="1.6"/></svg>
<svg class="a" style="left:1679px;top:185px" width="16" height="16" viewBox="0 0 16 16"><rect width="16" height="16" fill="#2a7be4"/><rect x="2" y="2" width="4" height="3" fill="#fff"/><rect x="2" y="6.5" width="4" height="3" fill="#fff"/><rect x="2" y="11" width="4" height="3" fill="#fff"/><rect x="10" y="2" width="4" height="3" fill="#fff"/><rect x="10" y="6.5" width="4" height="3" fill="#fff"/><rect x="10" y="11" width="4" height="3" fill="#fff"/></svg>
<svg class="a" style="left:1599px;top:213.5px" width="7" height="10" viewBox="0 0 7 10"><path d="M1.5 1 L5 5 L1.5 9" fill="none" stroke="#888" stroke-width="1.1"/></svg>
<svg class="a" style="left:1611px;top:210.0px" width="17" height="17" viewBox="0 0 17 17"><rect x="0.5" y="0.5" width="16" height="16" fill="#eaf2fb" stroke="#5d9ad6"/><rect x="0.5" y="0.5" width="16" height="3.5" fill="#2f7dc6"/><path d="M0.5 8 H16.5 M0.5 12 H16.5 M6 4 V16.5 M11 4 V16.5" stroke="#8fbbe6"/></svg>
<div class="t" style="left:1631px;top:211.5px;font-size:13.5px;color:#222">baseinfo</div>
<svg class="a" style="left:1599px;top:233.1px" width="7" height="10" viewBox="0 0 7 10"><path d="M1.5 1 L5 5 L1.5 9" fill="none" stroke="#888" stroke-width="1.1"/></svg>
<svg class="a" style="left:1611px;top:229.6px" width="17" height="17" viewBox="0 0 17 17"><rect x="0.5" y="0.5" width="16" height="16" fill="#eaf2fb" stroke="#5d9ad6"/><rect x="0.5" y="0.5" width="16" height="3.5" fill="#2f7dc6"/><path d="M0.5 8 H16.5 M0.5 12 H16.5 M6 4 V16.5 M11 4 V16.5" stroke="#8fbbe6"/></svg>
<div class="t" style="left:1631px;top:231.1px;font-size:13.5px;color:#222">orders</div>
<svg class="a" style="left:1599px;top:252.7px" width="7" height="10" viewBox="0 0 7 10"><path d="M1.5 1 L5 5 L1.5 9" fill="none" stroke="#888" stroke-width="1.1"/></svg>
<svg class="a" style="left:1611px;top:249.2px" width="17" height="17" viewBox="0 0 17 17"><rect x="0.5" y="0.5" width="16" height="16" fill="#eaf2fb" stroke="#5d9ad6"/><rect x="0.5" y="0.5" width="16" height="3.5" fill="#2f7dc6"/><path d="M0.5 8 H16.5 M0.5 12 H16.5 M6 4 V16.5 M11 4 V16.5" stroke="#8fbbe6"/></svg>
<div class="t" style="left:1631px;top:250.7px;font-size:13.5px;color:#222">qquser</div>
<svg class="a" style="left:1599px;top:272.3px" width="7" height="10" viewBox="0 0 7 10"><path d="M1.5 1 L5 5 L1.5 9" fill="none" stroke="#888" stroke-width="1.1"/></svg>
<svg class="a" style="left:1611px;top:268.8px" width="17" height="17" viewBox="0 0 17 17"><rect x="0.5" y="0.5" width="16" height="16" fill="#eaf2fb" stroke="#5d9ad6"/><rect x="0.5" y="0.5" width="16" height="3.5" fill="#2f7dc6"/><path d="M0.5 8 H16.5 M0.5 12 H16.5 M6 4 V16.5 M11 4 V16.5" stroke="#8fbbe6"/></svg>
<div class="t" style="left:1631px;top:270.3px;font-size:13.5px;color:#222">relation</div>
<svg class="a" style="left:1599px;top:291.9px" width="7" height="10" viewBox="0 0 7 10"><path d="M1.5 1 L5 5 L1.5 9" fill="none" stroke="#888" stroke-width="1.1"/></svg>
<svg class="a" style="left:1611px;top:288.4px" width="17" height="17" viewBox="0 0 17 17"><rect x="0.5" y="0.5" width="16" height="16" fill="#eaf2fb" stroke="#5d9ad6"/><rect x="0.5" y="0.5" width="16" height="3.5" fill="#2f7dc6"/><path d="M0.5 8 H16.5 M0.5 12 H16.5 M6 4 V16.5 M11 4 V16.5" stroke="#8fbbe6"/></svg>
<div class="t" style="left:1631px;top:289.9px;font-size:13.5px;color:#222">users</div>
<!-- bottom toolbar -->
<div class="a" style="left:208px;top:931px;width:1502px;height:18px;background:#f0f0f0"></div>
<div class="a" style="left:224px;top:937px;width:91px;height:7px;background:#858585"></div>
<div class="a" style="left:372px;top:931px;width:1px;height:18px;background:#e4e4e4"></div>
<div class="t" style="left:378px;top:931px;font-size:15px;color:#c4c4c4">+</div>
<div class="a" style="left:398px;top:939px;width:10px;height:2px;background:#c4c4c4"></div>
<svg class="a" style="left:417px;top:934px" width="12" height="11" viewBox="0 0 12 11"><path d="M1 6 L4.5 9.5 L11 1" fill="none" stroke="#c8c8c8" stroke-width="1.6"/></svg>
<svg class="a" style="left:437px;top:934px" width="10" height="10" viewBox="0 0 10 10"><path d="M1 1 L9 9 M9 1 L1 9" stroke="#c8c8c8" stroke-width="2"/></svg>
<svg class="a" style="left:456px;top:932px" width="13" height="13" viewBox="0 0 13 13"><path d="M10 3.5 A4.8 4.8 0 1 0 10.5 9" fill="none" stroke="#111" stroke-width="2.3"/><path d="M7 1 L12.5 1 L12.5 6Z" fill="#111"/></svg>
<svg class="a" style="left:475px;top:932px" width="13" height="13" viewBox="0 0 13 13"><circle cx="6.5" cy="6.5" r="5" fill="none" stroke="#111" stroke-width="2.3"/><path d="M3 3 L10 10" stroke="#111" stroke-width="2.3"/></svg>
<svg class="a" style="left:1540px;top:930px" width="14" height="16" viewBox="0 0 14 16"><rect x="0" y="0" width="14" height="16" fill="#cfe3f6"/><rect x="2.5" y="2.5" width="9" height="11" fill="none" stroke="#555"/><path d="M2.5 6 H11.5 M2.5 10 H11.5 M6 2.5 V13.5" stroke="#555"/></svg>
<svg class="a" style="left:1695px;top:937px" width="9" height="9" viewBox="0 0 9 9"><path d="M1 1 L8 8 M8 1 L1 8" stroke="#777" stroke-width="1.1"/></svg>
<!-- status bar -->
<div class="a" style="left:208px;top:949px;width:1502px;height:20px;background:#efefef"></div>
<div class="a" style="left:208px;top:949px;width:1502px;height:1px;background:#e6e6e6"></div>
<div class="a" style="left:372px;top:950px;width:1px;height:19px;background:#e2e2e2"></div>
<div class="t" style="left:378px;top:952px;font-size:13px;letter-spacing:-0.3px;color:#333">select u.user_id,u.user_name,u.user_email,</div>
<div class="t" style="left:791px;top:952px;font-size:13px;color:#333">o.oid,o.money,o.accepter&nbsp; from users u inner join orders o on (u.user_id = o.user_</div>
<div class="t" style="left:1259px;top:952px;font-size:13px;color:#333">只读</div>
<div class="a" style="left:1255px;top:950px;width:1px;height:19px;background:#e2e2e2"></div><div class="a" style="left:1334px;top:950px;width:1px;height:19px;background:#e2e2e2"></div>
<div class="t" style="left:1337px;top:952px;font-size:12.4px;color:#333">查询时间: 0.015s</div>
<div class="a" style="left:1480px;top:950px;width:1px;height:19px;background:#e2e2e2"></div>
<div class="t" style="left:1484px;top:952px;font-size:12.4px;color:#333">第 1 条记录 (共 3 条)</div>
<div class="a" style="left:1661px;top:951px;width:42px;height:17px;background:#cfe3f6"></div>
<svg class="a" style="left:1664px;top:953px" width="38" height="13" viewBox="0 0 38 13"><rect x="0.5" y="0.5" width="14" height="12" fill="none" stroke="#666"/><rect x="2" y="2" width="3" height="9" fill="#666"/><rect x="22.5" y="0.5" width="14" height="12" fill="none" stroke="#666"/><rect x="32" y="2" width="3" height="9" fill="#666"/></svg>
<!-- Pointofix overlay -->
<div class="a" style="left:1551px;top:895px;width:138px;height:25px;background:#fafafa;border:1px solid #cfcfcf;border-bottom:none;border-radius:3px 3px 0 0"></div>
<div class="a" style="left:1667px;top:897px;width:20px;height:22px;background:#e3e3e3"></div>
<div class="t" style="left:1554px;top:900px;font-size:13px;color:#aaa">Pointofix</div>
<div class="a" style="left:1552px;top:920px;width:136px;height:34px;background:#fff;border:1px solid #8ab7d9;border-radius:2px"></div>
<div class="t" style="left:1611px;top:932px;font-size:10px;color:#111">开始</div>
<!-- taskbar -->
<div class="a" style="left:208px;top:969px;width:1502px;height:49px;background:linear-gradient(90deg,#d6dae5 0%,#d6dbe6 50%,#dfe2ea 75%,#e6e8ec 100%)"></div>
<div class="a" style="left:962px;top:975px;width:38px;height:42px;background:#efe0e4;border-radius:4px"></div>
<div class="a" style="left:1140px;top:977px;width:37px;height:40px;background:#e9ecf1;border-radius:4px"></div>
<svg class="a" style="left:615px;top:984px" width="24" height="24" viewBox="0 0 24 24"><rect x="0" y="0" width="11.3" height="11.3" fill="#3b9be8"/><rect x="12.7" y="0" width="11.3" height="11.3" fill="#3b9be8"/><rect x="0" y="12.7" width="11.3" height="11.3" fill="#1f7fd6"/><rect x="12.7" y="12.7" width="11.3" height="11.3" fill="#1f7fd6"/></svg>
<svg class="a" style="left:660px;top:983px" width="24" height="24" viewBox="0 0 24 24"><circle cx="12" cy="12" r="11.5" fill="#e8453c"/><path d="M12 12 L2 17.5 A11.5 11.5 0 0 0 15 23.5Z" fill="#34a853"/><path d="M12 12 L15 23.5 A11.5 11.5 0 0 0 23.5 12 L12 12Z" fill="#fbbc05"/><circle cx="12" cy="12" r="5.5" fill="#fff"/><circle cx="12" cy="12" r="4.3" fill="#4285f4"/></svg>
<svg class="a" style="left:704px;top:983px" width="24" height="24" viewBox="0 0 24 24"><rect width="24" height="24" rx="2" fill="#bfe3b8"/><path d="M0 12 H12 V24 H0Z" fill="#f7d58c"/><path d="M0 0 H12 V12 H0Z" fill="#7fb7e8"/><path d="M2 2 L13 13" stroke="#d84040" stroke-width="2"/><circle cx="13" cy="13" r="2.5" fill="#d83030"/></svg>
<svg class="a" style="left:751px;top:983px" width="18" height="23" viewBox="0 0 18 23"><rect x="0" y="0" width="8" height="8" fill="#3b8fe8"/><rect x="10" y="0" width="8" height="8" fill="#f6c21c"/><path d="M0 10 H8 V23 L4 19 L0 23Z" fill="#e0443e"/><path d="M10 10 H18 V23 L14 19 L10 23Z" fill="#5cb85c"/></svg>
<svg class="a" style="left:794px;top:986px" width="22" height="19" viewBox="0 0 22 19"><rect width="22" height="19" rx="2" fill="#f4f4f4"/><circle cx="8" cy="11" r="3" fill="#e8732c"/><rect x="15" y="4" width="3" height="12" fill="#e8732c"/><circle cx="12" cy="5" r="1.3" fill="#e8732c"/></svg>
<svg class="a" style="left:836px;top:983px" width="25" height="25" viewBox="0 0 25 25"><path d="M18 1 L24 4 V21 L18 24 L6 13 L2 16 L0 15 V10 L2 9 L6 12Z" fill="#1f8ee0"/><path d="M18 6 V19 L10 12.5Z" fill="#d6dae5"/><path d="M18 1 L24 4 V21 L18 24Z" fill="#2a9cf0"/></svg>
<div class="a" style="left:881px;top:983px;width:24px;height:24px;background:#e8102a;border-radius:5px;color:#fff;font-size:10px;line-height:24px;text-align:center;font-weight:bold">有道</div>
<div class="a" style="left:926px;top:983px;width:23px;height:24px;background:#f7f7f7;border-radius:4px;color:#222;font-family:'Liberation Serif',serif;font-size:20px;line-height:24px;text-align:center;font-weight:bold">T</div>
<svg class="a" style="left:968px;top:985px" width="26" height="22" viewBox="0 0 26 22"><ellipse cx="10" cy="9" rx="9.5" ry="8" fill="#3fcf5a"/><ellipse cx="18" cy="14" rx="7.5" ry="6.5" fill="#e9e9e9"/><circle cx="16" cy="13.5" r="1" fill="#888"/><circle cx="20" cy="13.5" r="1" fill="#888"/></svg>
<svg class="a" style="left:1014px;top:986px" width="22" height="19" viewBox="0 0 22 19"><rect width="22" height="19" rx="2" fill="#f4f4f4"/><circle cx="8" cy="11" r="3" fill="#e8732c"/><rect x="15" y="4" width="3" height="12" fill="#e8732c"/><circle cx="12" cy="5" r="1.3" fill="#e8732c"/></svg>
<svg class="a" style="left:1058px;top:983px" width="24" height="24" viewBox="0 0 24 24"><circle cx="12" cy="12" r="11.5" fill="#e8453c"/><path d="M12 12 L2 17.5 A11.5 11.5 0 0 0 15 23.5Z" fill="#34a853"/><path d="M12 12 L15 23.5 A11.5 11.5 0 0 0 23.5 12 L12 12Z" fill="#fbbc05"/><circle cx="12" cy="12" r="5.5" fill="#fff"/><circle cx="12" cy="12" r="4.3" fill="#4285f4"/></svg>
<svg class="a" style="left:1101px;top:984px" width="26" height="23" viewBox="0 0 26 23"><path d="M0 2 H9 L11 4 H26 V23 H0Z" fill="#f8c93b"/><rect x="0" y="6" width="26" height="17" fill="#fbd655"/><rect x="5" y="14" width="16" height="9" fill="#1f7fd6"/></svg>
<svg class="a" style="left:1146px;top:983px" width="24" height="24" viewBox="0 0 24 24"><circle cx="12" cy="14" r="9" fill="none" stroke="#e8a33a" stroke-width="2.2"/><path d="M3 13 A9 9 0 0 1 9 4" fill="none" stroke="#e05050" stroke-width="2.5"/><path d="M14 4 A9 9 0 0 1 21 11" fill="none" stroke="#55b555" stroke-width="2.5"/><path d="M21 16 A9 9 0 0 1 14 22.5" fill="none" stroke="#4aa0e0" stroke-width="2.5"/></svg>
<svg class="a" style="left:1190px;top:983px" width="24" height="24" viewBox="0 0 24 24"><path d="M0 4 L12 0 L24 6 L22 24 L4 22Z" fill="#f05a8a"/><path d="M12 0 L24 6 L22 24Z" fill="#3a7be8"/><rect x="4" y="4" width="16" height="16" fill="#111"/><text x="6" y="12" font-size="7" fill="#fff" font-family="Liberation Sans" font-weight="bold">IJ</text><rect x="6" y="16" width="6" height="1.3" fill="#fff"/></svg>
<svg class="a" style="left:1235px;top:985px" width="25" height="20" viewBox="0 0 25 20"><circle cx="16" cy="3" r="2.8" fill="#f6b21c"/><path d="M0 19 L7 7 L12 14 L16 8 L25 19Z" fill="#6a5ae0"/></svg>
<svg class="a" style="left:1279px;top:983px" width="25" height="25" viewBox="0 0 25 25"><circle cx="12.5" cy="12.5" r="11.5" fill="#6a6de6"/><circle cx="10" cy="9" r="5" fill="#8fb3f5"/><ellipse cx="12.5" cy="13" rx="12" ry="3" fill="none" stroke="#c3d0fb" stroke-width="1.2" transform="rotate(-20 12.5 13)"/></svg>
<svg class="a" style="left:1356px;top:989px" width="15" height="9" viewBox="0 0 15 9"><path d="M1 8 L7.5 1.5 L14 8" fill="none" stroke="#333" stroke-width="1.4"/></svg>
<svg class="a" style="left:1381px;top:985px" width="18" height="18" viewBox="0 0 18 18"><rect width="15" height="15" fill="#2a8ee8"/><path d="M7 3 L9 7 L13 7 L10 9 L11 13 L7 10.5 L3 13 L4 9 L1 7 L5 7Z" fill="#fff"/><circle cx="14" cy="14" r="4" fill="#f39a1c"/></svg>
<svg class="a" style="left:1429px;top:986px" width="14" height="16" viewBox="0 0 14 16"><path d="M0 0 H6 V6 H0Z M8 0 H14 V6 H8Z M0 7 H14 V16 L10 12 H4 L0 16Z" fill="#111"/></svg>
<svg class="a" style="left:1458px;top:985px" width="12" height="18" viewBox="0 0 12 18"><rect x="3.5" y="1" width="5" height="10" rx="2.5" fill="none" stroke="#333" stroke-width="1.3"/><path d="M1 8 Q1 14 6 14 Q11 14 11 8 M6 14 V17" fill="none" stroke="#333" stroke-width="1.3"/></svg>
<div class="t" style="left:1488px;top:986px;font-size:15px;color:#222">英</div>
<svg class="a" style="left:1520px;top:985px" width="18" height="18" viewBox="0 0 18 18"><rect x="1" y="3" width="12" height="10" fill="none" stroke="#333" stroke-width="1.3"/><path d="M4 16 H10 M7 13 V16" stroke="#333" stroke-width="1.3"/><circle cx="14" cy="3" r="2.5" fill="#eee" stroke="#333"/></svg>
<svg class="a" style="left:1544px;top:986px" width="18" height="16" viewBox="0 0 18 16"><path d="M1 5 H4 L8 1 V15 L4 11 H1Z" fill="none" stroke="#333" stroke-width="1.2"/><path d="M11 5 Q13 8 11 11 M13 3 Q16 8 13 13" fill="none" stroke="#333" stroke-width="1.2"/></svg>
<svg class="a" style="left:1569px;top:986px" width="17" height="15" viewBox="0 0 17 15"><circle cx="3" cy="3" r="2.5" fill="#222"/><path d="M3 5 H14 L17 9 L14 13 H3Z" fill="#222"/></svg>
<div class="t" style="left:1563px;top:982px;width:100px;text-align:right;font-size:12.3px;color:#333">15:36</div>
<div class="t" style="left:1563px;top:996px;width:100px;text-align:right;font-size:12.3px;color:#333">2023-02-22</div>
<svg class="a" style="left:1675px;top:986px" width="17" height="17" viewBox="0 0 17 17"><circle cx="8.5" cy="8.5" r="8" fill="#4a6275"/><text x="5" y="13" font-size="11" fill="#fff" font-family="Liberation Sans">3</text></svg>
<div class="a" style="left:208px;top:1007.5px;width:1502px;height:3px;background:#e0292f"></div>
<div class="a" style="left:208px;top:1010px;width:1502px;height:8px;background:linear-gradient(90deg,#d9dde7 0%,#dadee8 50%,#e3e5ec 75%,#ebebee 100%)"></div><div class="a" style="left:669px;top:1012px;width:6px;height:2px;background:#888;border-radius:1px"></div><div class="a" style="left:712px;top:1012px;width:6px;height:2px;background:#888;border-radius:1px"></div><div class="a" style="left:890px;top:1012px;width:6px;height:2px;background:#888;border-radius:1px"></div><div class="a" style="left:934px;top:1012px;width:6px;height:2px;background:#888;border-radius:1px"></div><div class="a" style="left:1022px;top:1012px;width:6px;height:2px;background:#888;border-radius:1px"></div><div class="a" style="left:1066px;top:1012px;width:6px;height:2px;background:#888;border-radius:1px"></div><div class="a" style="left:1110px;top:1012px;width:6px;height:2px;background:#888;border-radius:1px"></div><div class="a" style="left:1199px;top:1012px;width:6px;height:2px;background:#888;border-radius:1px"></div><div class="a" style="left:1244px;top:1012px;width:6px;height:2px;background:#888;border-radius:1px"></div><div class="a" style="left:1288px;top:1012px;width:6px;height:2px;background:#888;border-radius:1px"></div><div class="a" style="left:978px;top:1012px;width:6px;height:2px;background:#d33;border-radius:1px"></div><div class="a" style="left:1151px;top:1012px;width:15px;height:2px;background:#666;border-radius:1px"></div>
</div></body></html>
